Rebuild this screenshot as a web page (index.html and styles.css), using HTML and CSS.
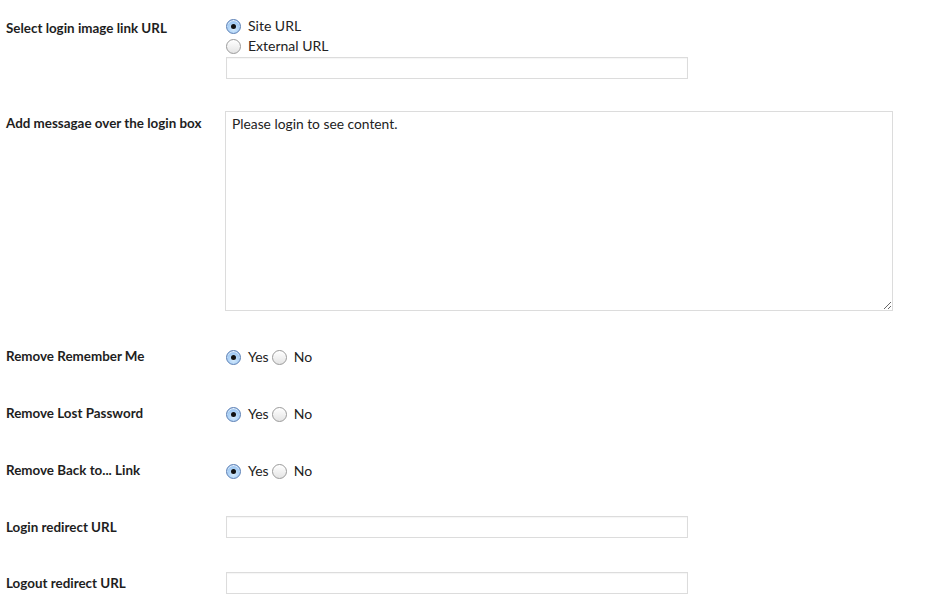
FILE: index.html
```html
<!DOCTYPE html>
<html lang="en">
<head>
    <meta charset="UTF-8">
    <meta name="viewport" content="width=device-width, initial-scale=1.0">
    <title>Login Settings</title>
    <link rel="stylesheet" href="styles.css">
</head>
<body>
    <form class="settings">

        <!-- Link for the login image -->
        <div class="row row-link">
            <label class="field-label">Select login image link URL</label>
            <div class="field">
                <label class="choice"><input type="radio" name="image_link" checked> Site URL</label>
                <label class="choice"><input type="radio" name="image_link"> External URL</label>
                <input type="text" class="text-input" name="image_link_url">
            </div>
        </div>

        <!-- Message above the box -->
        <div class="row row-message">
            <label class="field-label" for="message">Add messagae over the login box</label>
            <div class="field">
                <textarea id="message" name="message">Please login to see content.</textarea>
            </div>
        </div>

        <div class="row row-toggle">
            <label class="field-label">Remove Remember Me</label>
            <div class="field inline">
                <label class="choice"><input type="radio" name="remember" checked> Yes</label>
                <label class="choice"><input type="radio" name="remember"> No</label>
            </div>
        </div>

        <div class="row row-toggle">
            <label class="field-label">Remove Lost Password</label>
            <div class="field inline">
                <label class="choice"><input type="radio" name="lost" checked> Yes</label>
                <label class="choice"><input type="radio" name="lost"> No</label>
            </div>
        </div>

        <div class="row row-toggle">
            <label class="field-label">Remove Back to... Link</label>
            <div class="field inline">
                <label class="choice"><input type="radio" name="back" checked> Yes</label>
                <label class="choice"><input type="radio" name="back"> No</label>
            </div>
        </div>

        <div class="row row-url">
            <label class="field-label" for="login_url">Login redirect URL</label>
            <div class="field">
                <input type="text" class="text-input" id="login_url">
            </div>
        </div>

        <div class="row row-url">
            <label class="field-label" for="logout_url">Logout redirect URL</label>
            <div class="field">
                <input type="text" class="text-input" id="logout_url">
            </div>
        </div>

    </form>
</body>
</html>
```

FILE: styles.css
```css
* {
    margin: 0;
    padding: 0;
    box-sizing: border-box;
}

body {
    font-family: Lato, "Open Sans", sans-serif;
    font-size: 14px;
    line-height: 20px;
    color: #222;
    background-color: #fff;
    padding: 16px 0 0 6px;
}

.row {
    display: grid;
    grid-template-columns: 220px 1fr;
    align-items: start;
}

.field-label {
    font-size: 13.4px;
    font-weight: 700;
    color: #1e1e1e;
    line-height: 20px;
}

.field {
    display: flex;
    flex-direction: column;
    align-items: flex-start;
}

.field.inline {
    flex-direction: row;
    gap: 3px;
}

.choice {
    display: flex;
    align-items: center;
    gap: 7px;
    height: 20px;
    color: #222;
}

/* aqua style radio buttons */
input[type="radio"] {
    appearance: none;
    -webkit-appearance: none;
    width: 15px;
    height: 15px;
    border-radius: 50%;
    border: 1px solid #9a9a9a;
    background: linear-gradient(#ffffff, #e4e4e4);
    box-shadow: inset 0 1px 1px rgba(255, 255, 255, 0.9);
    display: grid;
    place-items: center;
}

input[type="radio"]:checked {
    border-color: #5a7fb5;
    background: radial-gradient(circle at 50% 70%, #d6ebfd 0, #a5cdf5 55%, #7aa9e4 100%);
}

input[type="radio"]:checked::after {
    content: "";
    width: 5px;
    height: 5px;
    border-radius: 50%;
    background-color: #111;
}

.text-input {
    width: 462px;
    height: 22px;
    border: 1px solid #dcdcdc;
    box-shadow: inset 0 1px 1px rgba(0, 0, 0, 0.04);
    background-color: #fff;
    font-family: inherit;
    font-size: 14px;
    padding: 0 5px;
}

.row-link {
    margin-bottom: 32px;
}

.row-link .field-label {
    padding-top: 2px;
}

.row-link .text-input {
    margin-top: 1px;
}

textarea {
    width: 668px;
    height: 200px;
    margin-left: -1px;
    border: 1px solid #dcdcdc;
    font-family: inherit;
    font-size: 13.8px;
    line-height: 20px;
    color: #222;
    padding: 2px 6px;
}

.row-message {
    margin-bottom: 36px;
}

.row-message .field-label {
    padding-top: 2px;
}

.row-toggle {
    margin-bottom: 37px;
}

.row-toggle:nth-child(5) {
    margin-bottom: 35px;
}

.row-toggle .field-label {
    margin-top: -1px;
}

.row-url {
    align-items: center;
}

.row-url + .row-url {
    margin-top: 34px;
}

.row-url .field-label {
    margin-top: -1px;
}
```
